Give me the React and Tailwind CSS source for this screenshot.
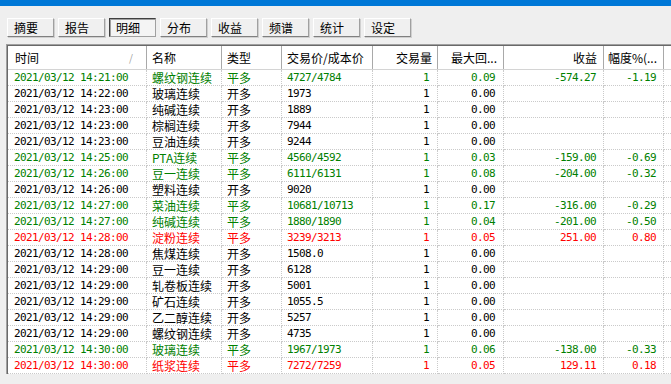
import React from 'react';

const tabs = ['摘要', '报告', '明细', '分布', '收益', '频谱', '统计', '设定'];

const G = 'text-[#008000]';
const R = 'text-[#ff0000]';
const B = 'text-black';

const rows = [
  ['14:21:00', '螺纹钢连续', '平多', '4727/4784', '0.09', '-574.27', '-1.19', G],
  ['14:22:00', '玻璃连续', '开多', '1973', '0.00', '', '', B],
  ['14:23:00', '纯碱连续', '开多', '1889', '0.00', '', '', B],
  ['14:23:00', '棕榈连续', '开多', '7944', '0.00', '', '', B],
  ['14:23:00', '豆油连续', '开多', '9244', '0.00', '', '', B],
  ['14:25:00', 'PTA连续', '平多', '4560/4592', '0.03', '-159.00', '-0.69', G],
  ['14:26:00', '豆一连续', '平多', '6111/6131', '0.08', '-204.00', '-0.32', G],
  ['14:26:00', '塑料连续', '开多', '9020', '0.00', '', '', B],
  ['14:27:00', '菜油连续', '平多', '10681/10713', '0.17', '-316.00', '-0.29', G],
  ['14:27:00', '纯碱连续', '平多', '1880/1890', '0.04', '-201.00', '-0.50', G],
  ['14:28:00', '淀粉连续', '平多', '3239/3213', '0.05', '251.00', '0.80', R],
  ['14:28:00', '焦煤连续', '开多', '1508.0', '0.00', '', '', B],
  ['14:29:00', '豆一连续', '开多', '6128', '0.00', '', '', B],
  ['14:29:00', '轧卷板连续', '开多', '5001', '0.00', '', '', B],
  ['14:29:00', '矿石连续', '开多', '1055.5', '0.00', '', '', B],
  ['14:29:00', '乙二醇连续', '开多', '5257', '0.00', '', '', B],
  ['14:29:00', '螺纹钢连续', '开多', '4735', '0.00', '', '', B],
  ['14:30:00', '玻璃连续', '平多', '1967/1973', '0.06', '-138.00', '-0.33', G],
  ['14:30:00', '纸浆连续', '平多', '7272/7259', '0.05', '129.11', '0.18', R],
];

const cols = 'grid grid-cols-[139px_75px_60px_91px_65px_66px_100px_60px_1fr]';
const cjk = "font-['Noto_Sans_CJK_SC',sans-serif] text-[12px]";
const mono = "font-['DejaVu_Sans_Mono','Noto_Sans_CJK_SC',monospace] text-[11px] tracking-[-0.62px]";
const hcell = 'flex items-center border-r border-[#a9a9a9] h-full';
const cell = 'flex items-center border-r border-b border-dotted border-[#cacaca] h-[16px] leading-[16px] whitespace-nowrap overflow-hidden';

export default function App() {
  return (
    <div className="w-[671px] h-[384px] bg-[#efefef] overflow-hidden">
      <div className="h-[6px] bg-[#0078d7]" />

      <div className="flex gap-[4px] pl-[7px] mt-[12px]">
        {tabs.map((t) => {
          const active = t === '明细';
          return (
            <div
              key={t}
              className={`w-[47px] h-[19px] flex items-center pl-[6px] leading-[16px] ${cjk} text-black ${
                active
                  ? 'border border-t-[#404040] border-l-[#404040] border-r-[#a0a0a0] border-b-[#a0a0a0] bg-[#f4f4f4] shadow-[inset_1px_1px_0_#a0a0a0]'
                  : 'border border-t-white border-l-white border-r-[#a0a0a0] border-b-[#808080] bg-[#f0f0f0] shadow-[1px_1px_0_#d0d0d0]'
              }`}
            >
              {t}
            </div>
          );
        })}
      </div>

      <div className="mt-[7px] ml-[6px] border-l border-t border-[#a0a0a0]">
        <div className="border-l border-t border-[#696969]">
          <div className={`${cols} h-[24px] bg-white border-b border-[#d4d4d4] ${cjk} text-black`}>
            <div className={`${hcell} justify-between pl-[7px] pr-[13px]`}>
              <span>时间</span>
              <span className="text-[10px] text-[#a0a0a0]">/</span>
            </div>
            <div className={`${hcell} pl-[5px]`}>名称</div>
            <div className={`${hcell} pl-[5px]`}>类型</div>
            <div className={`${hcell} pl-[5px]`}>交易价/成本价</div>
            <div className={`${hcell} justify-end pr-[5px]`}>交易量</div>
            <div className={`${hcell} justify-end pr-[6px]`}>最大回...</div>
            <div className={`${hcell} justify-end pr-[6px]`}>收益</div>
            <div className={`${hcell} justify-end pr-[6px]`}>幅度%(...</div>
            <div className="h-full" />
          </div>

          {rows.map((r, i) => (
            <div key={i} className={`${cols} bg-white ${r[7]}`}>
              <div className={`${cell} pl-[6px] ${mono}`}>2021/03/12 {r[0]}</div>
              <div className={`${cell} pl-[5px] ${cjk}`}>{r[1]}</div>
              <div className={`${cell} pl-[5px] ${cjk}`}>{r[2]}</div>
              <div className={`${cell} pl-[5px] ${mono}`}>{r[3]}</div>
              <div className={`${cell} justify-end pr-[8px] ${mono}`}>1</div>
              <div className={`${cell} justify-end pr-[8px] ${mono}`}>{r[4]}</div>
              <div className={`${cell} justify-end pr-[7px] ${mono}`}>{r[5]}</div>
              <div className={`${cell} justify-end pr-[7px] ${mono}`}>{r[6]}</div>
              <div className="h-[16px] border-b border-dotted border-[#cacaca]" />
            </div>
          ))}
        </div>
      </div>
    </div>
  );
}
